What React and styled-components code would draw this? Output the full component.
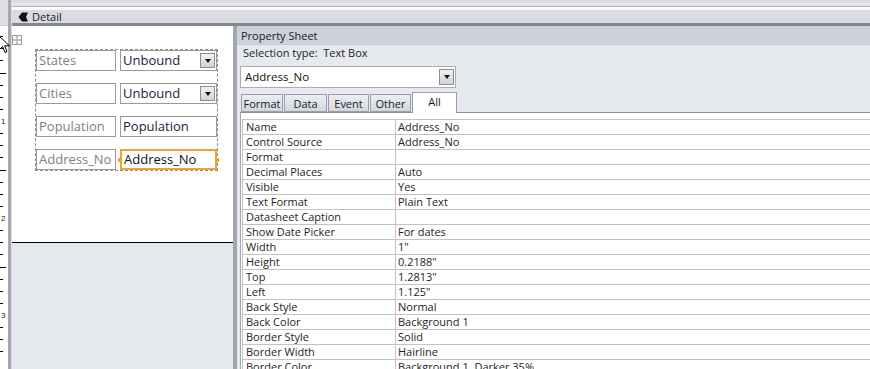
import React from 'react';
import styled, { createGlobalStyle } from 'styled-components';

const GlobalStyle = createGlobalStyle`
  html, body {
    margin: 0;
    padding: 0;
    background: #ffffff;
  }
  body {
    font-family: "Open Sans", "Liberation Sans", sans-serif;
  }
`;

const Frame = styled.div`
  position: relative;
  display: flex;
  width: 870px;
  height: 369px;
  overflow: hidden;
  background: #ffffff;
`;

const RulerCol = styled.div`
  display: flex;
  flex-direction: column;
  flex: none;
  width: 8px;
`;

const RulerCorner = styled.div`
  height: 26px;
  box-sizing: border-box;
  background: #dedfe5;
  border-bottom: 1px solid #c4c6cc;
`;

const RulerStrip = styled.div`
  flex: 1;
  background: #ffffff;
  overflow: hidden;
`;

const Splitter = styled.div`
  flex: none;
  width: 3px;
  background: #a4a8b1;
  border-right: 1px solid #d9dbe1;
`;

const MainCol = styled.div`
  flex: 1;
  display: flex;
  flex-direction: column;
  min-width: 0;
`;

const TopStrip = styled.div`
  height: 10px;
  background: linear-gradient(
    to bottom,
    #dcdce2 0,
    #dcdce2 3px,
    #f4f4f7 3px,
    #e3e3e9 4px,
    #e3e3e9 6px,
    #b0b0b8 6px,
    #b0b0b8 7px,
    #fbfbfc 7px
  );
`;

const DetailBar = styled.div`
  display: flex;
  align-items: center;
  gap: 4px;
  height: 13px;
  padding-left: 6px;
  background: #dadae2;
  border-bottom: 3px solid #83878f;
  font-size: 11px;
  color: #1c1c1c;
`;

const BodyRow = styled.div`
  flex: 1;
  display: flex;
  min-height: 0;
`;

const FormPane = styled.div`
  display: flex;
  flex-direction: column;
  flex: none;
  width: 221px;
`;

const Canvas = styled.div`
  position: relative;
  height: 193px;
  padding: 23px 0 0 23px;
  background: #ffffff;
  border-bottom: 1px solid #000000;
`;

const GrayArea = styled.div`
  flex: 1;
  background: #e6e9ee;
`;

const MoveHandle = styled.div`
  position: absolute;
  left: 0;
  top: 9px;
  width: 10px;
  height: 10px;
  box-sizing: border-box;
  border: 1px solid #9c9c9c;
  background: #ffffff;
  display: flex;
  align-items: center;
  justify-content: center;
`;

const LayoutGroup = styled.div`
  display: grid;
  grid-template-columns: 80px 97px;
  grid-auto-rows: 21px;
  column-gap: 4px;
  row-gap: 12px;
  width: 181px;
  border: 1px dashed #8e8e8e;
`;

const ControlBox = styled.div`
  position: relative;
  box-sizing: border-box;
  display: flex;
  align-items: center;
  padding-left: 2px;
  font-size: 13px;
  line-height: 19px;
  white-space: nowrap;
  overflow: visible;
  background: #ffffff;
  border: ${(p) => (p.$selected ? '2px solid #f3a133' : '1px solid #9a9a9a')};
  color: ${(p) => (p.$label ? '#7f7f7f' : p.$selected ? '#111111' : '#17233d')};
`;

const Grip = styled.span`
  position: absolute;
  top: 50%;
  width: 3px;
  height: 4px;
  margin-top: -2px;
  background: #f3a133;
  ${(p) => (p.$side === 'left' ? 'left: -4px;' : 'right: -4px;')}
`;

const DropButton = styled.div`
  position: absolute;
  right: 1px;
  top: 2px;
  bottom: 2px;
  width: 15px;
  box-sizing: border-box;
  border: 1px solid #8d8d8d;
  background: linear-gradient(to bottom, #f2f2f2, #d2d2d2);
  display: flex;
  align-items: center;
  justify-content: center;

  &::after {
    content: '';
    border-left: 3.5px solid transparent;
    border-right: 3.5px solid transparent;
    border-top: 4px solid #111111;
  }
`;

const PropertySheet = styled.div`
  flex: 1;
  display: flex;
  flex-direction: column;
  min-width: 0;
  border-left: 4px solid #a2a6af;
  background: #e6e9ee;
`;

const SheetHeader = styled.div`
  height: 18px;
  padding-left: 4px;
  background: #cdd1db;
  border-bottom: 1px solid #c5cad4;
  font-size: 11px;
  line-height: 19px;
  color: #1b1b1b;
`;

const SelectionLine = styled.div`
  height: 15px;
  padding-left: 6px;
  font-size: 11px;
  line-height: 15px;
  color: #1e1e1e;
  white-space: pre;
`;

const SheetCombo = styled.div`
  position: relative;
  box-sizing: border-box;
  width: 216px;
  height: 22px;
  margin: 6px 0 0 3px;
  padding-left: 4px;
  background: #ffffff;
  border: 1px solid #a9adb5;
  font-size: 11.5px;
  line-height: 20px;
  color: #111111;
`;

const TabStrip = styled.div`
  display: flex;
  align-items: flex-end;
  gap: 1px;
  height: 20px;
  margin: 4px 0 0 4px;
`;

const Tab = styled.div`
  box-sizing: border-box;
  width: ${(p) => p.$w}px;
  height: ${(p) => (p.$active ? '21px' : '18px')};
  margin-bottom: ${(p) => (p.$active ? '-1px' : '0')};
  padding-bottom: ${(p) => (p.$active ? '3px' : '0')};
  display: flex;
  align-items: center;
  justify-content: center;
  font-size: 11px;
  color: #1b1b1b;
  border: 1px solid #9a9ea8;
  border-bottom: ${(p) => (p.$active ? 'none' : '1px solid #9a9ea8')};
  background: ${(p) =>
    p.$active ? '#ffffff' : 'linear-gradient(to bottom, #eceef2, #d3d7de)'};
  position: relative;
  z-index: ${(p) => (p.$active ? 1 : 0)};
`;

const TabPage = styled.div`
  flex: 1;
  margin-left: 3px;
  padding: 6px 0 0 1px;
  background: #ffffff;
  border-top: 1px solid #8c909a;
  border-left: 1px solid #a3a7af;
  overflow: hidden;
`;

const Grid = styled.table`
  width: 100%;
  border-collapse: collapse;
  table-layout: fixed;
  font-size: 11px;
  color: #1e1e1e;
`;

const Cell = styled.td`
  height: 14px;
  padding: 0 0 0 ${(p) => (p.$value ? '2px' : '3px')};
  line-height: 14px;
  border: 1px solid #c3c3c3;
  border-right: ${(p) => (p.$value ? 'none' : '1px solid #c3c3c3')};
  white-space: nowrap;
  overflow: hidden;
`;

const CursorMark = styled.svg`
  position: absolute;
  left: -2px;
  top: 35px;
`;

const props = [
  ['Name', 'Address_No'],
  ['Control Source', 'Address_No'],
  ['Format', ''],
  ['Decimal Places', 'Auto'],
  ['Visible', 'Yes'],
  ['Text Format', 'Plain Text'],
  ['Datasheet Caption', ''],
  ['Show Date Picker', 'For dates'],
  ['Width', '1"'],
  ['Height', '0.2188"'],
  ['Top', '1.2813"'],
  ['Left', '1.125"'],
  ['Back Style', 'Normal'],
  ['Back Color', 'Background 1'],
  ['Border Style', 'Solid'],
  ['Border Width', 'Hairline'],
  ['Border Color', 'Background 1, Darker 35%'],
];

const tabs = [
  { name: 'Format', w: 42 },
  { name: 'Data', w: 43 },
  { name: 'Event', w: 41 },
  { name: 'Other', w: 41 },
  { name: 'All', w: 45, active: true },
];

function Ruler() {
  const ticks = [];
  for (let k = 0; k < 28; k++) {
    const y = -2 + k * 12.125;
    if (y < 1) continue;
    const major = k % 8 === 0;
    const half = k % 8 === 4;
    if (major) {
      ticks.push(
        <text key={k} x="1" y={y + 3} fontSize="8" fontFamily="Liberation Sans, sans-serif" fill="#222">
          {k / 8}
        </text>
      );
    } else {
      ticks.push(
        <line key={k} x1="0" x2={half ? 6 : 3} y1={Math.round(y) + 0.5} y2={Math.round(y) + 0.5} stroke="#000" strokeWidth="1" />
      );
    }
  }
  return (
    <svg width="8" height="343" viewBox="0 0 8 343">
      {ticks}
    </svg>
  );
}

function Combo({ children }) {
  return (
    <ControlBox>
      {children}
      <DropButton />
    </ControlBox>
  );
}

export default function App() {
  return (
    <>
      <GlobalStyle />
      <Frame>
        <RulerCol>
          <RulerCorner />
          <RulerStrip>
            <Ruler />
          </RulerStrip>
        </RulerCol>
        <Splitter />
        <MainCol>
          <TopStrip />
          <DetailBar>
            <svg width="10" height="10" viewBox="0 0 10 10">
              <path d="M10 0.5 L4 0.5 L0.5 5 L4 9.5 L10 9.5 L8 5 Z" fill="#111" />
            </svg>
            <span>Detail</span>
          </DetailBar>
          <BodyRow>
            <FormPane>
              <Canvas>
                <MoveHandle>
                  <svg width="8" height="8" viewBox="0 0 8 8">
                    <path d="M4 0.5 V7.5 M0.5 4 H7.5 M3 1.5 L4 0.5 L5 1.5 M3 6.5 L4 7.5 L5 6.5 M1.5 3 L0.5 4 L1.5 5 M6.5 3 L7.5 4 L6.5 5" stroke="#8a8a8a" strokeWidth="0.8" fill="none" />
                  </svg>
                </MoveHandle>
                <LayoutGroup>
                  <ControlBox $label>States</ControlBox>
                  <Combo>Unbound</Combo>
                  <ControlBox $label>Cities</ControlBox>
                  <Combo>Unbound</Combo>
                  <ControlBox $label>Population</ControlBox>
                  <ControlBox>Population</ControlBox>
                  <ControlBox $label>Address_No</ControlBox>
                  <ControlBox $selected>
                    Address_No
                    <Grip $side="left" />
                    <Grip $side="right" />
                  </ControlBox>
                </LayoutGroup>
              </Canvas>
              <GrayArea />
            </FormPane>
            <PropertySheet>
              <SheetHeader>Property Sheet</SheetHeader>
              <SelectionLine>{'Selection type:  Text Box'}</SelectionLine>
              <SheetCombo>
                Address_No
                <DropButton />
              </SheetCombo>
              <TabStrip>
                {tabs.map((t) => (
                  <Tab key={t.name} $w={t.w} $active={t.active}>
                    {t.name}
                  </Tab>
                ))}
              </TabStrip>
              <TabPage>
                <Grid>
                  <colgroup>
                    <col style={{ width: 153 }} />
                    <col />
                  </colgroup>
                  <tbody>
                    {props.map(([k, v]) => (
                      <tr key={k}>
                        <Cell>{k}</Cell>
                        <Cell $value>{v}</Cell>
                      </tr>
                    ))}
                  </tbody>
                </Grid>
              </TabPage>
            </PropertySheet>
          </BodyRow>
        </MainCol>
        <CursorMark width="13" height="19" viewBox="0 0 13 19">
          <path d="M1 1 L1 15 L4.5 11.5 L7 17.5 L9 16.6 L6.6 10.8 L11.5 10.8 Z" fill="#fff" stroke="#000" strokeWidth="1" strokeLinejoin="round" />
        </CursorMark>
      </Frame>
    </>
  );
}
